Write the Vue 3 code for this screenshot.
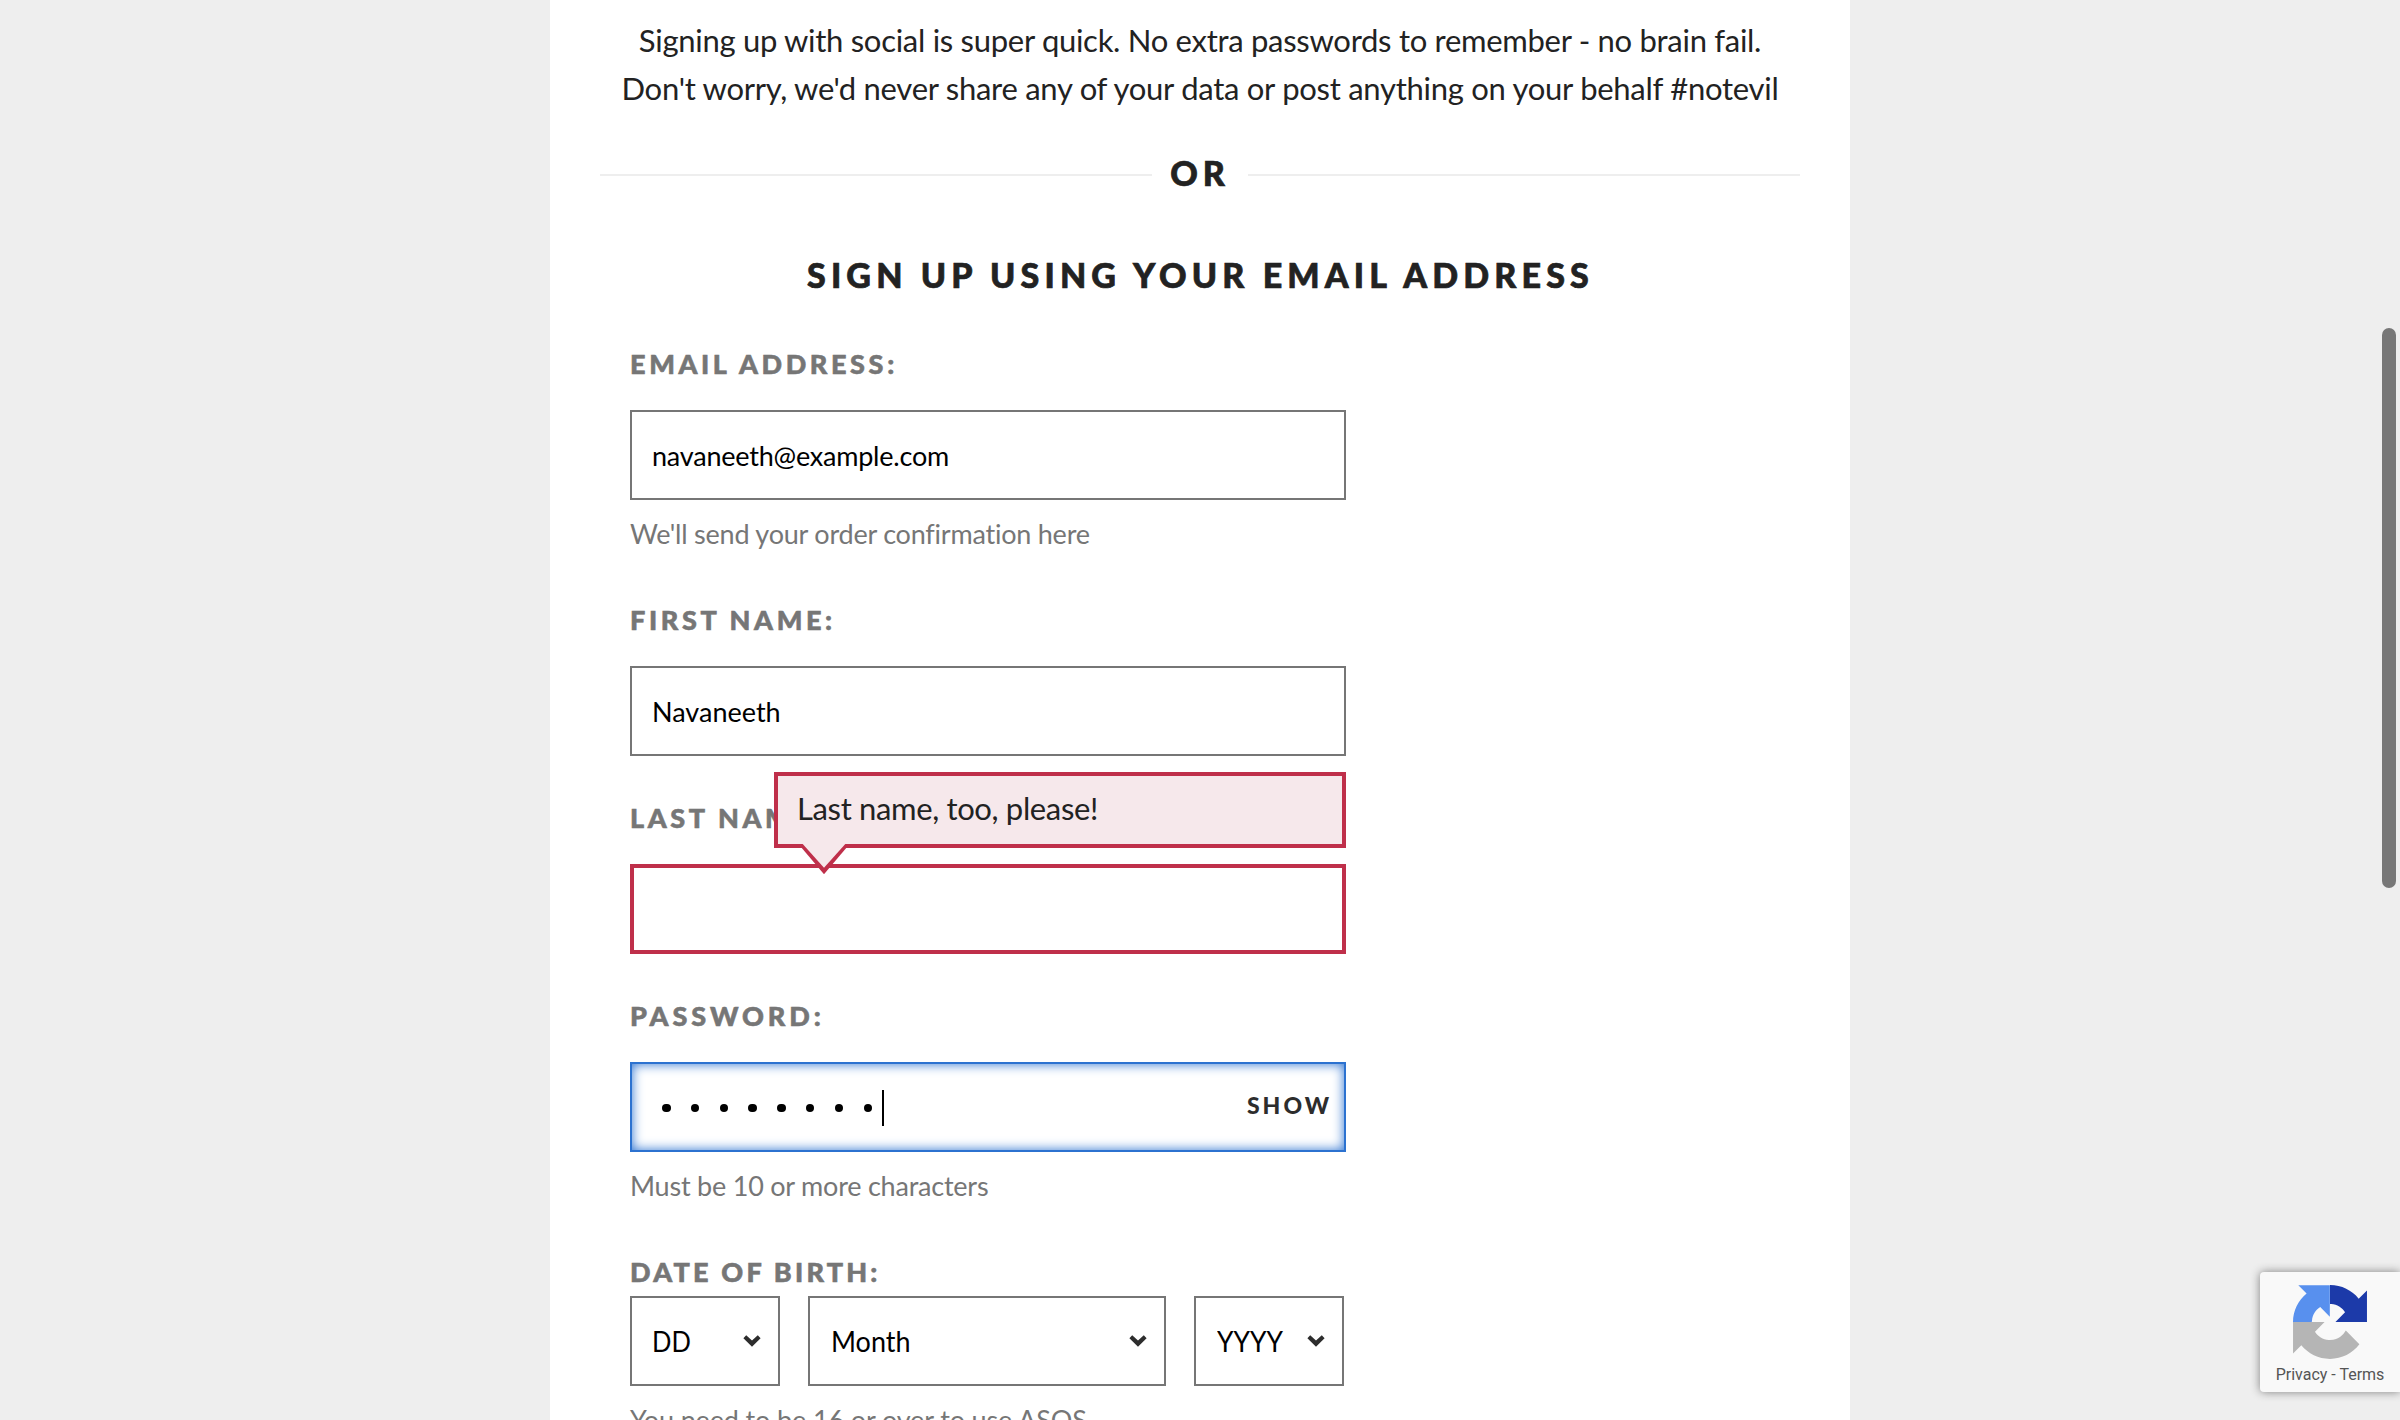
<script setup>
const selects = [
  { value: 'DD', name: 'day' },
  { value: 'Month', name: 'month' },
  { value: 'YYYY', name: 'year' },
]
const passwordLength = 8
</script>

<template>
  <div class="page">
    <main class="panel">
      <p class="intro">
        <span class="intro-a">Signing up with social is super quick. No extra passwords to remember - no brain fail.</span>
        <span class="intro-b">Don't worry, we'd never share any of your data or post anything on your behalf #notevil</span>
      </p>

      <div class="divider">
        <span class="rule"></span>
        <span class="or">OR</span>
        <span class="rule"></span>
      </div>

      <h1 class="title">SIGN UP USING YOUR EMAIL ADDRESS</h1>

      <form class="form">
        <div class="field with-hint">
          <label class="label">EMAIL ADDRESS:</label>
          <div class="input"><span class="value email">navaneeth@example.com</span></div>
          <p class="hint">We'll send your order confirmation here</p>
        </div>

        <div class="field">
          <label class="label">FIRST NAME:</label>
          <div class="input"><span class="value">Navaneeth</span></div>
        </div>

        <div class="field">
          <label class="label">LAST NAME:</label>
          <div class="input invalid"></div>
          <div class="tooltip">
            Last name, too, please!
            <svg class="pointer" width="50" height="36" viewBox="0 0 50 36">
              <path d="M2.8 0H47.2V4L25 30.2 2.8 4Z" fill="#bf2f4a" />
              <path d="M3.7 0H46.3L25 23.8Z" fill="#f6e8eb" />
            </svg>
          </div>
        </div>

        <div class="field with-hint">
          <label class="label password-label">PASSWORD:</label>
          <div class="input focused">
            <span class="dots"><i v-for="n in passwordLength" :key="n" class="dot"></i></span>
            <span class="caret"></span>
            <button type="button" class="show">SHOW</button>
          </div>
          <p class="hint">Must be 10 or more characters</p>
        </div>

        <div class="field">
          <label class="label dob-label">DATE OF BIRTH:</label>
          <div class="selects">
            <div v-for="s in selects" :key="s.name" class="input select" :class="s.name">
              <span class="option">{{ s.value }}</span>
              <svg class="chevron" width="18" height="12" viewBox="0 0 18 12">
                <path d="M3.2 0.2 9 5.6 14.8 0.2 17.6 3.2 9 11.8 0.4 3.2Z" fill="#2d2d2d" />
              </svg>
            </div>
          </div>
          <p class="hint age-hint">You need to be 16 or over to use ASOS</p>
        </div>
      </form>
    </main>

    <div class="scrollbar"></div>

    <aside class="captcha">
      <svg class="captcha-logo" width="74" height="74" viewBox="0 0 64 64">
        <defs>
          <clipPath id="quad-right"><rect x="32" y="0" width="32" height="32" /></clipPath>
          <clipPath id="quad-left"><rect x="0" y="0" width="32" height="32" /></clipPath>
        </defs>
        <path clip-path="url(#quad-right)" fill="#1c3aa9" d="M64 31.955l-.033-1.37V4.687l-7.16 7.16C50.948 4.674 42.033.093 32.05.093c-10.4 0-19.622 4.96-25.458 12.64l11.736 11.86a15.55 15.55 0 0 1 4.754-5.334c2.05-1.6 4.952-2.906 8.968-2.906.485 0 .86.057 1.135.163 4.976.393 9.288 3.14 11.828 7.124l-8.307 8.307L64 31.953" />
        <path clip-path="url(#quad-left)" fill="#5890ee" d="M31.862.094l-1.37.033H4.594l7.16 7.16C4.58 13.147 0 22.06 0 32.046c0 10.4 4.96 19.622 12.64 25.458L24.5 45.768a15.55 15.55 0 0 1-5.334-4.754c-1.6-2.05-2.906-4.952-2.906-8.968 0-.485.057-.86.163-1.135.393-4.976 3.14-9.288 7.124-11.828l8.307 8.307L31.86.095" />
        <path fill="#b5b5b5" d="M.001 32.045l.033 1.37v25.898l7.16-7.16c5.86 7.173 14.774 11.754 24.76 11.754 10.4 0 19.622-4.96 25.458-12.64l-11.736-11.86a15.55 15.55 0 0 1-4.754 5.334c-2.05 1.6-4.952 2.906-8.968 2.906-.485 0-.86-.057-1.135-.163-4.976-.393-9.288-3.14-11.828-7.124l8.307-8.307c-10.522.04-22.4.066-27.295-.005" />
      </svg>
      <span class="captcha-links">Privacy - Terms</span>
    </aside>
  </div>
</template>

<style>
body {
  margin: 0;
}
</style>

<style scoped>
.page {
  position: relative;
  width: 2400px;
  height: 1420px;
  overflow: hidden;
  background: #eee;
  color: #222;
  font-family: Lato, "Open Sans", sans-serif;
}
.panel {
  box-sizing: border-box;
  width: 1300px;
  height: 1420px;
  margin: 0 auto;
  padding: 16px 50px 0;
  overflow: hidden;
  background: #fff;
}
.intro {
  margin: 0;
  font-size: 31px;
  line-height: 48px;
  text-align: center;
  white-space: nowrap;
}
.intro span {
  display: block;
}
.intro-a {
  letter-spacing: -0.285px;
}
.intro-b {
  letter-spacing: -0.27px;
}
.divider {
  display: flex;
  align-items: center;
  margin-top: 41px;
}
.rule {
  flex: 1;
  height: 2px;
  margin-top: 4px;
  background: #eee;
}
.or {
  width: 96px;
  text-align: center;
}
.or,
.title {
  font-size: 34px;
  font-weight: 900;
  line-height: 40px;
  letter-spacing: 5px;
  -webkit-text-stroke: 0.7px currentColor;
}
.title {
  margin: 62px 0 53px;
  padding-left: 1px;
  letter-spacing: 5.15px;
  text-align: center;
}
.form {
  display: flex;
  flex-direction: column;
  gap: 46px;
  width: 716px;
  margin-left: 30px;
}
.field {
  position: relative;
  display: flex;
  flex-direction: column;
}
.with-hint {
  margin-bottom: 8px;
}
.label {
  margin: 0 0 30px;
  color: #767676;
  font-size: 27px;
  font-weight: 900;
  line-height: 32px;
  letter-spacing: 3.63px;
  -webkit-text-stroke: 0.6px currentColor;
}
.password-label {
  letter-spacing: 3.95px;
}
.dob-label {
  margin-bottom: 8px;
  letter-spacing: 3.22px;
}
.input {
  box-sizing: border-box;
  display: flex;
  align-items: center;
  height: 90px;
  padding: 0 20px;
  border: 2px solid #767676;
  background: #fff;
  color: #000;
}
.value {
  padding-top: 2px;
  font-size: 27px;
  line-height: 32px;
}
.email {
  letter-spacing: -0.216px;
}
.hint {
  margin: 18px 0 0;
  color: #767676;
  font-size: 27px;
  line-height: 32px;
  letter-spacing: -0.22px;
  white-space: nowrap;
}
.age-hint {
  letter-spacing: -0.13px;
}
.invalid {
  border: 4px solid #bf2f4a;
}
.tooltip {
  position: absolute;
  top: -30px;
  left: 144px;
  box-sizing: border-box;
  width: 572px;
  height: 76px;
  padding: 12px 19px;
  border: 4px solid #bf2f4a;
  background: #f6e8eb;
  color: #222;
  font-size: 31px;
  line-height: 40px;
  letter-spacing: -0.353px;
}
.pointer {
  position: absolute;
  top: 68px;
  left: 21px;
}
.focused {
  padding: 0 12px 0 30px;
  border-color: #2c72d0;
  box-shadow: inset 0 0 12px #2c72d0;
}
.dots {
  display: flex;
  gap: 20.3px;
  padding-top: 2px;
}
.dot {
  width: 8.5px;
  height: 8.5px;
  border-radius: 50%;
  background: #000;
}
.caret {
  width: 2px;
  height: 36px;
  margin: 1px 0 0 10px;
  background: #000;
}
.show {
  margin: 0 0 4px auto;
  padding: 0;
  border: 0;
  background: none;
  color: #2d2d2d;
  font: 900 23px/32px Lato, "Open Sans", sans-serif;
  letter-spacing: 3px;
}
.selects {
  display: flex;
  gap: 28px;
}
.select {
  justify-content: space-between;
  padding: 0 17px 0 20px;
}
.day,
.year {
  width: 150px;
}
.month {
  width: 358px;
}
.option {
  font-size: 29px;
  line-height: 36px;
  transform: scaleX(0.88);
  transform-origin: left;
}
.month .option {
  margin-left: 1px;
  transform: scaleX(0.93);
}
.year .option {
  margin-left: 1px;
  transform: scaleX(0.91);
}
.chevron {
  flex: none;
}
.scrollbar {
  position: absolute;
  top: 328px;
  left: 2382px;
  width: 14px;
  height: 560px;
  border-radius: 7px;
  background: #777;
}
.captcha {
  position: absolute;
  top: 1272px;
  left: 2260px;
  display: flex;
  flex-direction: column;
  align-items: center;
  box-sizing: border-box;
  width: 140px;
  height: 120px;
  padding: 13px 0 0;
  border-radius: 4px 0 0 4px;
  background: #f9f9f9;
  box-shadow: 0 0 10px #808080;
}
.captcha-links {
  margin-top: 6px;
  color: #555;
  font: 16px/20px Roboto, sans-serif;
  white-space: nowrap;
}
</style>
